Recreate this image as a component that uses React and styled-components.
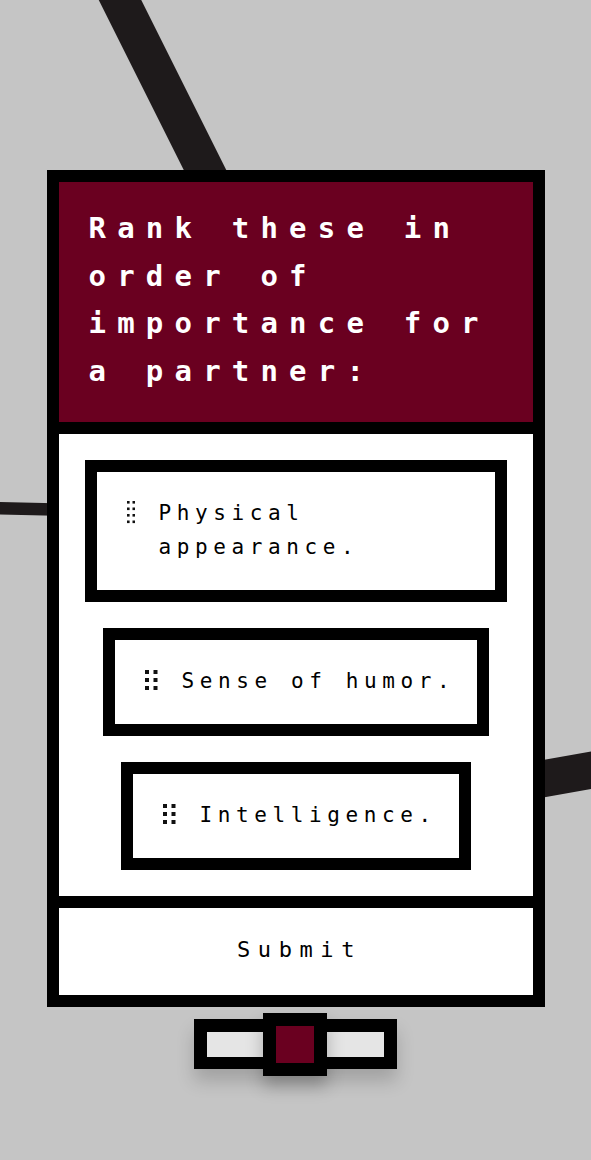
import React from "react";
import styled, { createGlobalStyle } from "styled-components";

const MAROON = "#6a0020";
const INK = "#000";

const GlobalStyle = createGlobalStyle`
  html, body {
    margin: 0;
    padding: 0;
    background: #c5c5c5;
  }
  body {
    font-family: "DejaVu Sans Mono", "Liberation Mono", monospace;
    -webkit-font-smoothing: antialiased;
  }
  * { box-sizing: border-box; }
`;

const Page = styled.div`
  position: relative;
  width: 591px;
  min-height: 1160px;
  overflow: hidden;
  display: flex;
  flex-direction: column;
  align-items: center;
  padding-top: 170px;
`;

const Backdrop = styled.svg`
  position: absolute;
  inset: 0;
  width: 591px;
  height: 1160px;
  z-index: 0;
  pointer-events: none;
`;

const Card = styled.section`
  position: relative;
  z-index: 1;
  width: 498px;
  border: 12px solid ${INK};
  background: ${INK};
  display: flex;
  flex-direction: column;
  gap: 12px;
`;

const Header = styled.h1`
  margin: 0;
  background: ${MAROON};
  color: #fff;
  height: 240px;
  padding: 23px 30px 27px 30px;
  font-family: "DejaVu Sans Mono", monospace;
  font-weight: 700;
  font-size: 29px;
  line-height: 47.5px;
  letter-spacing: 11.2px;
`;

const List = styled.ol`
  list-style: none;
  margin: 0;
  background: #fff;
  padding: 26px 26px;
  display: flex;
  flex-direction: column;
  gap: 26px;
`;

const Item = styled.li`
  margin: 0 ${(p) => p.$indent}px;
  border: 12px solid ${INK};
  background: #fff;
  padding: 24px 14px 26px 30px;
  display: flex;
  align-items: flex-start;
  gap: 24px;
  color: #000;
  font-size: 21px;
  line-height: 34px;
  letter-spacing: 5.6px;
  cursor: grab;
`;

const Grip = styled.svg`
  flex: none;
  margin-top: ${(p) => p.$top}px;
`;

const Label = styled.span`
  flex: 1;
`;

const SubmitButton = styled.button`
  display: block;
  width: 100%;
  height: 87px;
  border: none;
  background: #fff;
  color: #000;
  font-family: "DejaVu Sans Mono", monospace;
  font-size: 22px;
  letter-spacing: 7.6px;
  padding: 0 0 4px 8px;
  cursor: pointer;
`;

const SliderArea = styled.div`
  position: relative;
  z-index: 1;
  padding-top: 6px;
`;

const Track = styled.div`
  position: relative;
  width: 203px;
  height: 50px;
  margin-top: 6px;
  border: 13px solid ${INK};
  border-bottom-width: 12px;
  background: #e5e5e5;
  box-shadow: 0 12px 18px rgba(0, 0, 0, 0.18);
`;

const Thumb = styled.div`
  position: absolute;
  left: 56px;
  top: -19px;
  width: 64px;
  height: 63px;
  border: 13px solid ${INK};
  background: ${MAROON};
  box-shadow: 0 10px 16px rgba(0, 0, 0, 0.25);
`;

function DragGrip({ dense }) {
  if (dense) {
    const dots = [];
    for (let r = 0; r < 4; r++) {
      for (let c = 0; c < 2; c++) {
        dots.push(<rect key={`${r}-${c}`} x={c * 5.5} y={r * 6.5} width="2.6" height="2.6" fill="#111" />);
      }
    }
    return (
      <Grip $top={5} width="8" height="23" viewBox="0 0 8 23">
        {dots}
      </Grip>
    );
  }
  const dots = [];
  for (let r = 0; r < 3; r++) {
    for (let c = 0; c < 2; c++) {
      dots.push(<rect key={`${r}-${c}`} x={c * 8.5} y={r * 8} width="4" height="4" fill="#111" />);
    }
  }
  return (
    <Grip $top={6} width="13" height="20" viewBox="0 0 13 20">
      {dots}
    </Grip>
  );
}

const choices = [
  { id: "looks", text: "Physical appearance.", dense: true },
  { id: "humor", text: "Sense of humor." },
  { id: "smarts", text: "Intelligence." },
];

export default function App() {
  return (
    <>
      <GlobalStyle />
      <Page>
        <Backdrop viewBox="0 0 591 1160">
          <line x1="60" y1="-120" x2="260" y2="280" stroke="#1e1a1b" strokeWidth="38" />
          <line x1="-10" y1="508" x2="120" y2="511" stroke="#1e1a1b" strokeWidth="12.5" />
          <line x1="480" y1="790" x2="620" y2="765" stroke="#1e1a1b" strokeWidth="37" />
        </Backdrop>
        <Card>
          <Header>Rank these in order of importance for a partner:</Header>
          <List>
            {choices.map((c, i) => (
              <Item key={c.id} $indent={i * 18}>
                <DragGrip dense={c.dense} />
                <Label>{c.text}</Label>
              </Item>
            ))}
          </List>
          <SubmitButton type="button">Submit</SubmitButton>
        </Card>
        <SliderArea>
          <Track>
            <Thumb />
          </Track>
        </SliderArea>
      </Page>
    </>
  );
}
